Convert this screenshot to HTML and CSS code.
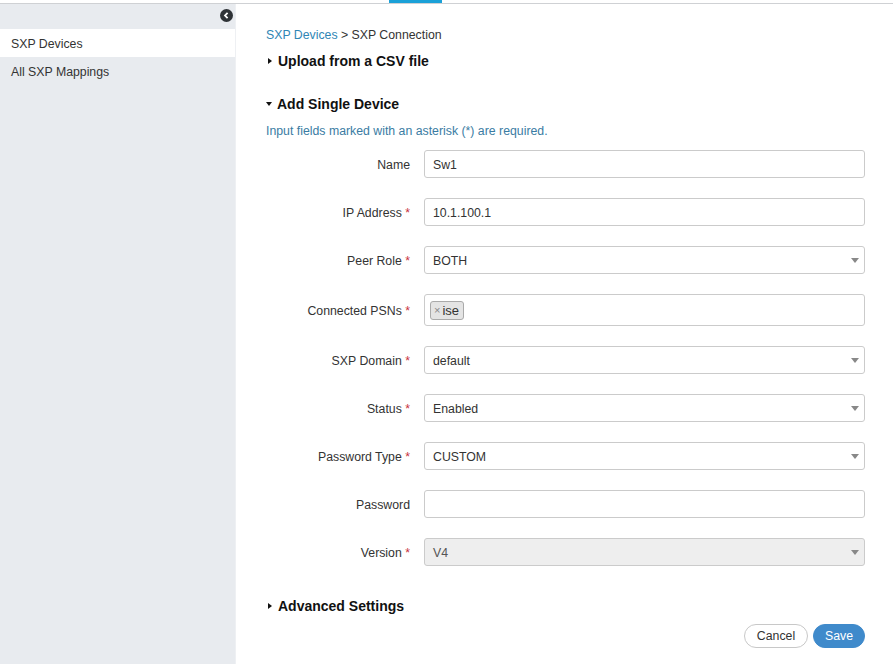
FILE: index.html
```html
<!DOCTYPE html>
<html>
<head>
<meta charset="utf-8">
<link rel="stylesheet" href="styles.css">
</head>
<body>
<div class="topbar"><div class="tab-indicator"></div></div>
<div class="layout">
  <aside class="sidebar">
    <div class="collapse-row">
      <svg class="collapse-icon" width="13" height="13" viewBox="0 0 13 13"><circle cx="6.5" cy="6.5" r="6.5" fill="#2f3337"/><path d="M7.6 3.8 L5 6.5 L7.6 9.2" fill="none" stroke="#fff" stroke-width="1.8"/></svg>
    </div>
    <div class="nav-item active">SXP Devices</div>
    <div class="nav-item">All SXP Mappings</div>
  </aside>
  <main class="main">
    <div class="breadcrumb"><a class="crumb-link">SXP Devices</a> &gt; SXP Connection</div>
    <div class="section-title upload"><span class="caret-right"></span>Upload from a CSV file</div>
    <div class="section-title add"><span class="caret-down"></span>Add Single Device</div>
    <div class="note">Input fields marked with an asterisk (*) are required.</div>
    <div class="form">
      <div class="row"><label class="lbl">Name</label><div class="field">Sw1</div></div>
      <div class="row"><label class="lbl">IP Address <span class="req">*</span></label><div class="field">10.1.100.1</div></div>
      <div class="row"><label class="lbl">Peer Role <span class="req">*</span></label><div class="field select">BOTH<span class="arrow"></span></div></div>
      <div class="row"><label class="lbl">Connected PSNs <span class="req">*</span></label><div class="field tags"><span class="tag"><span class="tag-x">×</span>ise</span></div></div>
      <div class="row"><label class="lbl">SXP Domain <span class="req">*</span></label><div class="field select">default<span class="arrow"></span></div></div>
      <div class="row"><label class="lbl">Status <span class="req">*</span></label><div class="field select">Enabled<span class="arrow"></span></div></div>
      <div class="row"><label class="lbl">Password Type <span class="req">*</span></label><div class="field select">CUSTOM<span class="arrow"></span></div></div>
      <div class="row"><label class="lbl">Password</label><div class="field"></div></div>
      <div class="row"><label class="lbl">Version <span class="req">*</span></label><div class="field select disabled">V4<span class="arrow"></span></div></div>
    </div>
    <div class="section-title advanced"><span class="caret-right"></span>Advanced Settings</div>
    <div class="actions">
      <button class="btn cancel">Cancel</button>
      <button class="btn save">Save</button>
    </div>
  </main>
</div>
</body>
</html>
```
FILE: styles.css
```css
html, body {
  margin: 0;
  padding: 0;
  height: 100%;
}
body {
  font-family: "Liberation Sans", Arial, sans-serif;
  font-size: 12.3px;
  color: #333;
  background: #fff;
}
.topbar {
  height: 3px;
  border-bottom: 1px solid #cfd1d4;
  display: flex;
}
.tab-indicator {
  margin-left: 389px;
  width: 53px;
  height: 3px;
  background: #1aa1d8;
}
.layout {
  display: flex;
  height: calc(100% - 4px);
}
.sidebar {
  width: 235px;
  flex: none;
  background: #e8ebef;
  border-right: 1px solid #eef0f3;
}
.collapse-row {
  height: 25px;
  display: flex;
  justify-content: flex-end;
  align-items: flex-start;
  padding-right: 2px;
}
.collapse-icon {
  margin-top: 5px;
  display: block;
}
.nav-item {
  height: 28px;
  line-height: 30px;
  padding-left: 11px;
  color: #333;
}
.nav-item.active {
  background: #fff;
}
.main {
  flex: 1;
  padding: 23px 28px 0 30px;
  display: flex;
  flex-direction: column;
}
.breadcrumb {
  line-height: 16px;
  color: #333;
}
.crumb-link {
  color: #2f86b5;
}
.section-title {
  font-size: 14px;
  font-weight: bold;
  line-height: 20px;
  color: #111;
  display: flex;
  align-items: center;
}
.section-title.upload { margin-top: 8px; }
.section-title.add { margin-top: 23px; }
.section-title.advanced { margin-top: 30px; }
.caret-right {
  width: 0;
  height: 0;
  border-top: 3.5px solid transparent;
  border-bottom: 3.5px solid transparent;
  border-left: 4px solid #111;
  margin: 0 6px 0 2px;
}
.caret-down {
  width: 0;
  height: 0;
  border-left: 3.5px solid transparent;
  border-right: 3.5px solid transparent;
  border-top: 4px solid #111;
  margin: 0 5px 0 0;
}
.note {
  margin-top: 9px;
  line-height: 16px;
  color: #3a7ca3;
}
.form {
  margin-top: 11px;
  display: flex;
  flex-direction: column;
  gap: 20px;
}
.row {
  display: flex;
  align-items: center;
}
.lbl {
  width: 144px;
  flex: none;
  text-align: right;
  margin-right: 14px;
  padding-top: 2px;
  color: #333;
}
.req {
  color: #c8323c;
}
.field {
  flex: 1;
  height: 24px;
  padding-top: 2px;
  border: 1px solid #cbcbcb;
  border-radius: 3px;
  padding-left: 8px;
  display: flex;
  align-items: center;
  color: #333;
  position: relative;
  background: #fff;
}
.field.tags {
  height: 30px;
  padding-top: 0;
  padding-left: 5px;
}
.field.disabled {
  background: #eeeeee;
  color: #555;
}
.arrow {
  position: absolute;
  right: 5px;
  top: 11px;
  width: 0;
  height: 0;
  border-left: 4px solid transparent;
  border-right: 4px solid transparent;
  border-top: 5px solid #888;
}
.tag {
  display: inline-flex;
  align-items: center;
  height: 17px;
  padding: 0 4px 0 3px;
  background: #e4e4e4;
  border: 1px solid #aaa;
  border-radius: 3px;
  font-size: 13px;
  color: #333;
}
.tag-x {
  color: #888;
  font-size: 11px;
  margin-right: 2px;
}
.actions {
  margin-top: 8px;
  display: flex;
  justify-content: flex-end;
  gap: 5px;
}
.btn {
  height: 24px;
  border-radius: 12px;
  font-family: "Liberation Sans", Arial, sans-serif;
  font-size: 12.3px;
  padding: 0;
  cursor: pointer;
}
.btn.cancel {
  width: 64px;
  background: #fff;
  border: 1px solid #c8c8c8;
  color: #333;
}
.btn.save {
  width: 52px;
  background: #3f8acb;
  border: 1px solid #3f8acb;
  color: #fff;
}
```
